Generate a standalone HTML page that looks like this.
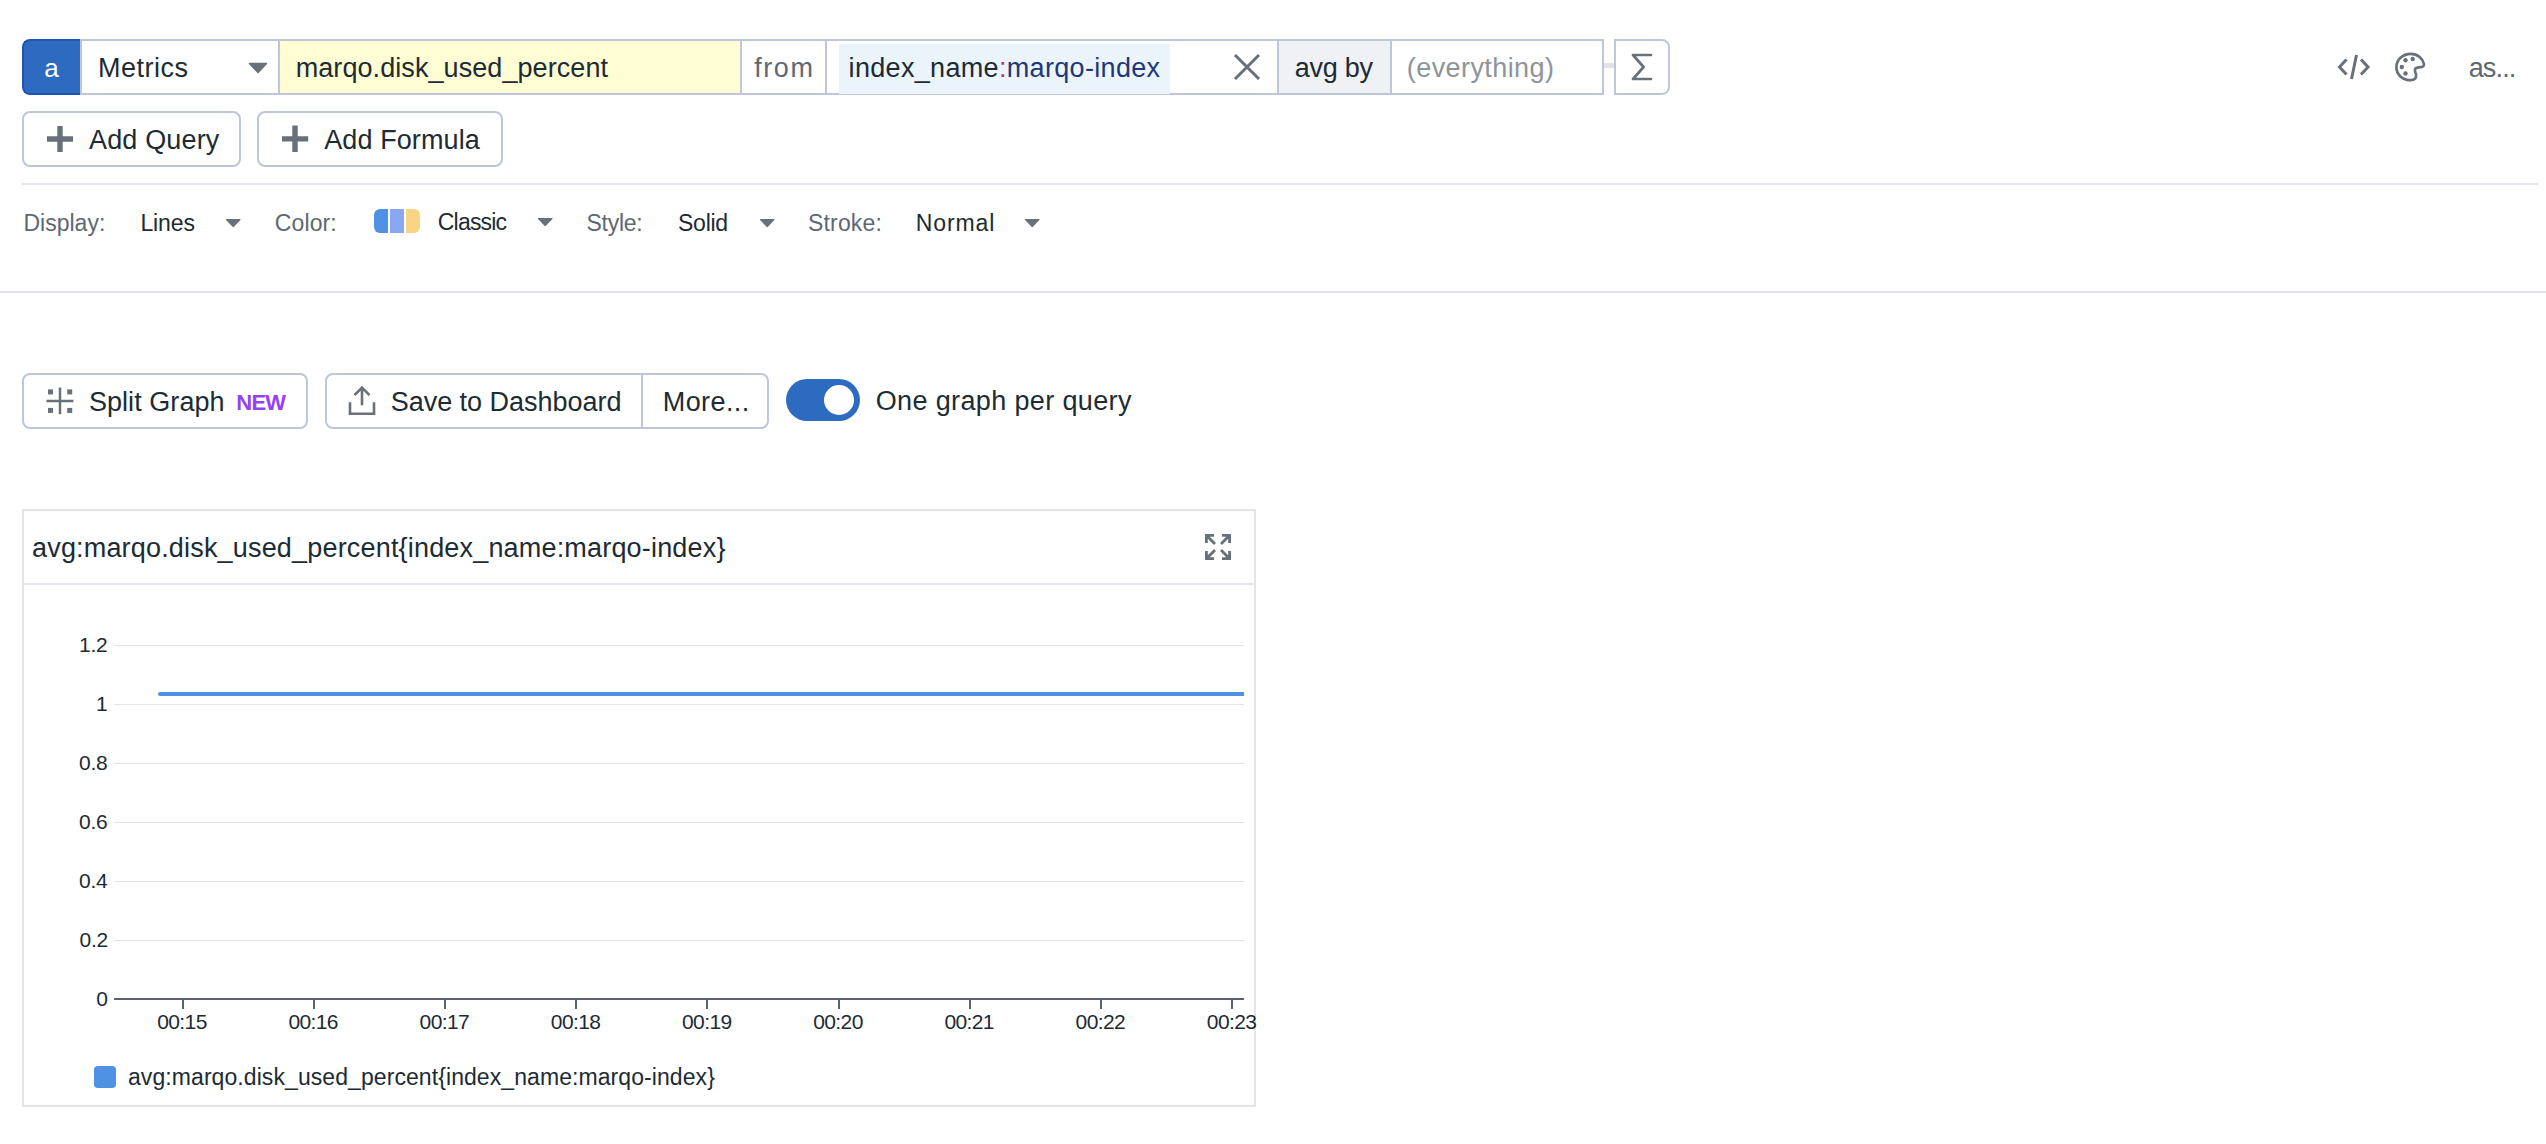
<!DOCTYPE html>
<html><head><meta charset="utf-8"><title>Metrics</title>
<style>
html,body{margin:0;padding:0;background:#ffffff;width:2546px;height:1144px;overflow:hidden;position:relative}
body{font-family:"Liberation Sans",sans-serif}
.t{position:absolute;white-space:pre}
.b{position:absolute;box-sizing:border-box}
svg{position:absolute;overflow:visible}
</style></head><body>
<!-- query bar -->
<div class="b" style="left:22px;top:39px;width:58px;height:56px;background:#2d6bc0;border:2px solid #2153b6;border-right:none;border-radius:8px 0 0 8px"></div>
<div class="b" style="left:80px;top:39px;width:1524px;height:56px;border:2px solid #c0c6da"></div>
<div class="b" style="left:280px;top:41px;width:460px;height:52px;background:#fffdd3"></div>
<div class="b" style="left:1279px;top:41px;width:111px;height:52px;background:#eff1f5"></div>
<div class="b" style="left:839px;top:44px;width:331px;height:50px;background:#ebf4fb"></div>
<div class="b" style="left:278px;top:41px;width:2px;height:52px;background:#c0c6da"></div>
<div class="b" style="left:740px;top:41px;width:2px;height:52px;background:#c0c6da"></div>
<div class="b" style="left:825px;top:41px;width:2px;height:52px;background:#c0c6da"></div>
<div class="b" style="left:1277px;top:41px;width:2px;height:52px;background:#c0c6da"></div>
<div class="b" style="left:1390px;top:41px;width:2px;height:52px;background:#c0c6da"></div>
<svg style="left:0;top:0" width="2546" height="120">
  <path d="M249.5,63.5 H266.5 L258,72.5 Z" fill="#68707a" stroke="#68707a" stroke-width="1.5" stroke-linejoin="round"/>
  <path d="M1235,55 L1259,79 M1259,55 L1235,79" stroke="#68707a" stroke-width="3" fill="none"/>
  <path d="M1651,55 H1633 L1643.6,67 L1633,79 H1651" stroke="#68707a" stroke-width="2.7" fill="none" stroke-linecap="round" stroke-linejoin="round"/>
  <path d="M2346.5,59.5 L2339.5,67 L2346.5,74.5 M2361,59.5 L2368,67 L2361,74.5 M2356.5,55 L2351.5,79" stroke="#68707a" stroke-width="3" fill="none"/>
  <g transform="translate(2395.5,52.5)">
    <path d="M15.5,1.3 C7,1.3 0.9,7.2 0.9,14.6 C0.9,22 6.8,27.7 15.2,27.7 C18.8,27.7 21,25.8 20.6,22.6 C20.3,20.4 18.8,18.4 19.6,16.6 C20.4,15 22.6,14.7 25.4,14.6 C27.6,14.5 28.9,13.2 28.3,11.2 C27,6 22,1.3 15.5,1.3 Z" stroke="#68707a" stroke-width="2.7" fill="none"/>
    <circle cx="10" cy="7.8" r="2.2" fill="#68707a"/>
    <circle cx="17.2" cy="6.5" r="2.2" fill="#68707a"/>
    <circle cx="6.3" cy="14.5" r="2.2" fill="#68707a"/>
    <circle cx="10" cy="21" r="2.2" fill="#68707a"/>
  </g>
</svg>
<div class="b" style="left:1604px;top:63px;width:10px;height:5px;background:#e0e3ea"></div>
<div class="b" style="left:1614px;top:39px;width:56px;height:56px;border:2px solid #c0c6da;border-radius:0 8px 8px 0"></div>
<!-- add buttons -->
<div class="b" style="left:22px;top:111px;width:219px;height:56px;border:2px solid #c0c6da;border-radius:8px"></div>
<div class="b" style="left:257px;top:111px;width:246px;height:56px;border:2px solid #c0c6da;border-radius:8px"></div>
<svg style="left:0;top:100px" width="400" height="80">
  <path d="M60,26 V52 M47,39 H73" stroke="#68707a" stroke-width="5.4" fill="none"/>
  <path d="M295,25.6 V52 M282,38.9 H308.2" stroke="#68707a" stroke-width="5.4" fill="none"/>
</svg>
<div class="b" style="left:22px;top:183px;width:2516px;height:2px;background:#e1e4ea"></div>
<!-- options row -->
<svg style="left:0;top:200px" width="1100" height="50">
  <path d="M226.5,19.5 H240 L233.2,26.5 Z" fill="#68707a" stroke="#68707a" stroke-width="1.2" stroke-linejoin="round"/>
  <path d="M538.5,18.5 H552 L545.2,25.5 Z" fill="#68707a" stroke="#68707a" stroke-width="1.2" stroke-linejoin="round"/>
  <path d="M760.5,19.5 H774 L767.2,26.5 Z" fill="#68707a" stroke="#68707a" stroke-width="1.2" stroke-linejoin="round"/>
  <path d="M1025.5,19.5 H1039 L1032.2,26.5 Z" fill="#68707a" stroke="#68707a" stroke-width="1.2" stroke-linejoin="round"/>
</svg>
<div class="b" style="left:374px;top:209px;width:14px;height:24px;background:#4f92e5;border-radius:6px 0 0 6px"></div>
<div class="b" style="left:390px;top:209px;width:14px;height:24px;background:#8aa8f2"></div>
<div class="b" style="left:406px;top:209px;width:14px;height:24px;background:#f6d584;border-radius:0 6px 6px 0"></div>
<div class="b" style="left:0px;top:291px;width:2546px;height:2px;background:#e1e4ea"></div>
<!-- action buttons -->
<div class="b" style="left:22px;top:373px;width:286px;height:56px;border:2px solid #c0c6da;border-radius:8px"></div>
<div class="b" style="left:325px;top:373px;width:444px;height:56px;border:2px solid #c0c6da;border-radius:8px"></div>
<div class="b" style="left:641px;top:375px;width:2px;height:52px;background:#c0c6da"></div>
<svg style="left:0;top:360px" width="400" height="80">
  <rect x="48" y="29.4" width="5" height="5" fill="#68707a"/>
  <rect x="67.2" y="29.4" width="5" height="5" fill="#68707a"/>
  <rect x="48" y="47.9" width="5" height="5" fill="#68707a"/>
  <rect x="67.2" y="47.9" width="5" height="5" fill="#68707a"/>
  <path d="M60,27.5 V54.3 M46.4,40.9 H73.5" stroke="#68707a" stroke-width="2.5" fill="none"/>
  <g transform="translate(0,0.7)"><path d="M350,41.5 V53 H374 V41.5" stroke="#68707a" stroke-width="2.6" fill="none"/>
  <path d="M362,44.5 V27.5 M354.5,34.5 L362,27 L369.5,34.5" stroke="#68707a" stroke-width="2.6" fill="none"/></g>
</svg>
<div class="b" style="left:786px;top:379px;width:74px;height:42px;background:#2d6bc0;border-radius:21px"></div>
<div class="b" style="left:824px;top:385px;width:30px;height:30px;background:#ffffff;border-radius:15px"></div>
<!-- card -->
<div class="b" style="left:22px;top:509px;width:1234px;height:598px;border:2px solid #e2e3eb"></div>
<div class="b" style="left:24px;top:583px;width:1230px;height:2px;background:#e2e3eb"></div>
<svg style="left:1205px;top:534px" width="26" height="26">
  <path d="M1.4,9 V1.4 H9 M2.8,2.8 L10,10 M17,1.4 H24.6 V9 M23.2,2.8 L16,10 M1.4,17 V24.6 H9 M2.8,23.2 L10,16 M17,24.6 H24.6 V17 M23.2,23.2 L16,16" stroke="#68707a" stroke-width="2.8" fill="none"/>
</svg>
<div class="b" style="left:114px;top:645px;width:1130px;height:1px;background:#e3e3e4"></div>
<div class="b" style="left:114px;top:704px;width:1130px;height:1px;background:#e3e3e4"></div>
<div class="b" style="left:114px;top:763px;width:1130px;height:1px;background:#e3e3e4"></div>
<div class="b" style="left:114px;top:822px;width:1130px;height:1px;background:#e3e3e4"></div>
<div class="b" style="left:114px;top:881px;width:1130px;height:1px;background:#e3e3e4"></div>
<div class="b" style="left:114px;top:940px;width:1130px;height:1px;background:#e3e3e4"></div>
<div class="b" style="left:158px;top:692px;width:1086px;height:4px;background:#4f91e3;border-radius:2px 0 0 2px"></div>
<div class="b" style="left:114px;top:998px;width:1130px;height:2px;background:#5a6171"></div>
<div class="b" style="left:181.6px;top:1000px;width:2px;height:9px;background:#5a6171"></div>
<div class="b" style="left:312.8px;top:1000px;width:2px;height:9px;background:#5a6171"></div>
<div class="b" style="left:444px;top:1000px;width:2px;height:9px;background:#5a6171"></div>
<div class="b" style="left:575.2px;top:1000px;width:2px;height:9px;background:#5a6171"></div>
<div class="b" style="left:706.4px;top:1000px;width:2px;height:9px;background:#5a6171"></div>
<div class="b" style="left:837.6px;top:1000px;width:2px;height:9px;background:#5a6171"></div>
<div class="b" style="left:968.8px;top:1000px;width:2px;height:9px;background:#5a6171"></div>
<div class="b" style="left:1100px;top:1000px;width:2px;height:9px;background:#5a6171"></div>
<div class="b" style="left:1231.2px;top:1000px;width:2px;height:9px;background:#5a6171"></div>
<div class="b" style="left:94px;top:1066px;width:22px;height:22px;background:#4f91e3;border-radius:4px"></div>

<div class='t' style='left:44.3px;top:55px;font-size:26px;line-height:26px;letter-spacing:0px;color:#ffffff;font-weight:400'>a</div>
<div class='t' style='left:98.1px;top:55px;font-size:27px;line-height:27px;letter-spacing:0.5px;color:#1c2b34;font-weight:400'>Metrics</div>
<div class='t' style='left:295.7px;top:55px;font-size:27px;line-height:27px;letter-spacing:0.073px;color:#1c2b34;font-weight:400'>marqo.disk_used_percent</div>
<div class='t' style='left:754.3px;top:55px;font-size:27px;line-height:27px;letter-spacing:1.534px;color:#5e6873;font-weight:400'>from</div>
<div class='t' style='left:848.6px;top:55px;font-size:27px;line-height:27px;letter-spacing:0.323px;color:#1c2b34;font-weight:400'>index_name<span style="color:#b02a9b">:</span><span style="color:#1d377a">marqo-index</span></div>
<div class='t' style='left:1294.7px;top:55px;font-size:27px;line-height:27px;letter-spacing:-0.24px;color:#1c2b34;font-weight:400'>avg by</div>
<div class='t' style='left:1406.8px;top:55px;font-size:27px;line-height:27px;letter-spacing:0.418px;color:#8d949b;font-weight:400'>(everything)</div>
<div class='t' style='left:2468.7px;top:55px;font-size:27px;line-height:27px;letter-spacing:-0.85px;color:#5e6873;font-weight:400'>as...</div>
<div class='t' style='left:89.0px;top:127px;font-size:27px;line-height:27px;letter-spacing:0.15px;color:#1c2b34;font-weight:400'>Add Query</div>
<div class='t' style='left:324.2px;top:127px;font-size:27px;line-height:27px;letter-spacing:0.1px;color:#1c2b34;font-weight:400'>Add Formula</div>
<div class='t' style='left:23.5px;top:212px;font-size:23px;line-height:23px;letter-spacing:-0.0px;color:#5e6873;font-weight:400'>Display:</div>
<div class='t' style='left:140.4px;top:212px;font-size:23px;line-height:23px;letter-spacing:-0.1px;color:#1c2b34;font-weight:400'>Lines</div>
<div class='t' style='left:274.8px;top:212px;font-size:23px;line-height:23px;letter-spacing:0.12px;color:#5e6873;font-weight:400'>Color:</div>
<div class='t' style='left:437.8px;top:211px;font-size:23px;line-height:23px;letter-spacing:-0.8px;color:#1c2b34;font-weight:400'>Classic</div>
<div class='t' style='left:586.5px;top:212px;font-size:23px;line-height:23px;letter-spacing:-0.28px;color:#5e6873;font-weight:400'>Style:</div>
<div class='t' style='left:678.0px;top:212px;font-size:23px;line-height:23px;letter-spacing:-0.25px;color:#1c2b34;font-weight:400'>Solid</div>
<div class='t' style='left:808.0px;top:212px;font-size:23px;line-height:23px;letter-spacing:0.167px;color:#5e6873;font-weight:400'>Stroke:</div>
<div class='t' style='left:915.7px;top:212px;font-size:23px;line-height:23px;letter-spacing:0.92px;color:#1c2b34;font-weight:400'>Normal</div>
<div class='t' style='left:88.9px;top:389px;font-size:27px;line-height:27px;letter-spacing:0.06px;color:#1c2b34;font-weight:400'>Split Graph</div>
<div class='t' style='left:236.3px;top:392px;font-size:22px;line-height:22px;letter-spacing:-0.8px;color:#9541f5;font-weight:700'>NEW</div>
<div class='t' style='left:390.7px;top:389px;font-size:27px;line-height:27px;letter-spacing:-0.025px;color:#1c2b34;font-weight:400'>Save to Dashboard</div>
<div class='t' style='left:662.8px;top:389px;font-size:27px;line-height:27px;letter-spacing:0.4px;color:#1c2b34;font-weight:400'>More...</div>
<div class='t' style='left:875.7px;top:388px;font-size:27px;line-height:27px;letter-spacing:0.367px;color:#1c2b34;font-weight:400'>One graph per query</div>
<div class='t' style='left:32.0px;top:535px;font-size:27px;line-height:27px;letter-spacing:0.18px;color:#1c2b34;font-weight:400'>avg:marqo.disk_used_percent{index_name:marqo-index}</div>
<div class='t' style='left:79.0px;top:634px;font-size:21px;line-height:21px;letter-spacing:-0.2px;color:#1c2b34;font-weight:400'>1.2</div>
<div class='t' style='left:96.0px;top:693px;font-size:21px;line-height:21px;letter-spacing:0px;color:#1c2b34;font-weight:400'>1</div>
<div class='t' style='left:79.0px;top:752px;font-size:21px;line-height:21px;letter-spacing:-0.2px;color:#1c2b34;font-weight:400'>0.8</div>
<div class='t' style='left:79.0px;top:811px;font-size:21px;line-height:21px;letter-spacing:-0.2px;color:#1c2b34;font-weight:400'>0.6</div>
<div class='t' style='left:79.0px;top:870px;font-size:21px;line-height:21px;letter-spacing:-0.2px;color:#1c2b34;font-weight:400'>0.4</div>
<div class='t' style='left:79.5px;top:929px;font-size:21px;line-height:21px;letter-spacing:-0.2px;color:#1c2b34;font-weight:400'>0.2</div>
<div class='t' style='left:96.2px;top:988px;font-size:21px;line-height:21px;letter-spacing:0px;color:#1c2b34;font-weight:400'>0</div>
<div class='t' style='left:157.2px;top:1011px;font-size:21px;line-height:21px;letter-spacing:-0.6px;color:#1c2b34;font-weight:400'>00:15</div>
<div class='t' style='left:288.4px;top:1011px;font-size:21px;line-height:21px;letter-spacing:-0.6px;color:#1c2b34;font-weight:400'>00:16</div>
<div class='t' style='left:419.6px;top:1011px;font-size:21px;line-height:21px;letter-spacing:-0.6px;color:#1c2b34;font-weight:400'>00:17</div>
<div class='t' style='left:550.8px;top:1011px;font-size:21px;line-height:21px;letter-spacing:-0.6px;color:#1c2b34;font-weight:400'>00:18</div>
<div class='t' style='left:682.0px;top:1011px;font-size:21px;line-height:21px;letter-spacing:-0.6px;color:#1c2b34;font-weight:400'>00:19</div>
<div class='t' style='left:813.2px;top:1011px;font-size:21px;line-height:21px;letter-spacing:-0.6px;color:#1c2b34;font-weight:400'>00:20</div>
<div class='t' style='left:944.4px;top:1011px;font-size:21px;line-height:21px;letter-spacing:-0.6px;color:#1c2b34;font-weight:400'>00:21</div>
<div class='t' style='left:1075.6px;top:1011px;font-size:21px;line-height:21px;letter-spacing:-0.6px;color:#1c2b34;font-weight:400'>00:22</div>
<div class='t' style='left:1206.8px;top:1011px;font-size:21px;line-height:21px;letter-spacing:-0.6px;color:#1c2b34;font-weight:400'>00:23</div>
<div class='t' style='left:128.0px;top:1066px;font-size:23px;line-height:23px;letter-spacing:0.076px;color:#1c2b34;font-weight:400'>avg:marqo.disk_used_percent{index_name:marqo-index}</div>
</body></html>
